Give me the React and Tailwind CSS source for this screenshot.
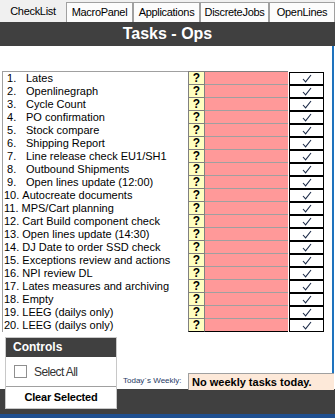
import React from "react"

const tabs = [
  { label: "CheckList", w: "w-[66px]", active: true },
  { label: "MacroPanel", w: "w-[67px]" },
  { label: "Applications", w: "w-[67px]" },
  { label: "DiscreteJobs", w: "w-[69px]" },
  { label: "OpenLines", w: "w-[66px]" },
]

const tasks = [
  "Lates",
  "Openlinegraph",
  "Cycle Count",
  "PO confirmation",
  "Stock compare",
  "Shipping Report",
  "Line release check EU1/SH1",
  "Outbound Shipments",
  "Open lines update (12:00)",
  "Autocreate documents",
  "MPS/Cart planning",
  "Cart Build component check",
  "Open lines update (14:30)",
  "DJ Date to order SSD check",
  "Exceptions review and actions",
  "NPI review DL",
  "Lates measures and archiving",
  "Empty",
  "LEEG (dailys only)",
  "LEEG (dailys only)",
]

const Check = () => (
  <svg width="10" height="9" viewBox="0 0 10 9" fill="none">
    <path d="M1 5 L3.6 7.8 L9 1" stroke="#1c2b48" strokeWidth="1.1" />
  </svg>
)

export default function App() {
  return (
    <div className="w-[335px] h-[418px] overflow-hidden bg-white flex flex-col font-['Liberation_Sans',Arial,sans-serif]">
      {/* Tab strip */}
      <div className="h-[22px] flex items-end bg-[#f0f0f0]">
        {tabs.map((t) =>
          t.active ? (
            <div
              key={t.label}
              className={`${t.w} h-[22px] flex items-start justify-center pt-[3px] text-[11px] tracking-[-0.3px] text-black`}
            >
              {t.label}
            </div>
          ) : (
            <div
              key={t.label}
              className={`${t.w} h-[20px] flex items-center justify-center bg-[#fcfcfc] border-l border-r border-t border-[#a0a0a0] text-[11px] tracking-[-0.3px] text-black`}
            >
              {t.label}
            </div>
          )
        )}
      </div>

      {/* Header */}
      <div className="h-[24px] bg-[#404040] flex items-center justify-center text-white font-bold text-[16px]">
        Tasks - Ops
      </div>

      {/* Task list */}
      <div className="h-[291px] flex pt-[25px] pl-[2px] mr-[1px] border-r-2 border-[#1e73be]">
        <div className="w-[186px] h-[261px] border-l border-t border-[#a0a0a0] text-[11px] text-black">
          {tasks.map((task, i) => (
            <div key={i} className="h-[13px] leading-[13px] flex whitespace-nowrap">
              {i < 9 ? (
                <span className="w-[23px] pl-[4px]">{i + 1}.</span>
              ) : (
                <span className="pl-[1px] pr-[3px]">{i + 1}.</span>
              )}
              <span>{task}</span>
            </div>
          ))}
        </div>
        <div className="flex flex-col">
          <div className="flex border-t border-[#808080] w-[100px]" />
          {tasks.map((_, i) => (
            <div key={i} className="flex h-[13px]">
              <div
                className={`w-[17px] bg-[#ffffc0] border-l border-r border-b ${
                  i === tasks.length - 1 ? "border-b-black" : "border-b-[#808080]"
                } border-[#808080] flex items-center justify-center text-[12px] font-bold leading-none`}
              >
                ?
              </div>
              <div
                className={`w-[83px] bg-[#ff9999] border-b ${
                  i === tasks.length - 1 ? "border-black" : "border-[#a0a0a0]"
                }`}
              />
              <div className="ml-[1px] w-[35px] bg-white border border-black flex items-center justify-center">
                <Check />
              </div>
            </div>
          ))}
        </div>
      </div>

      {/* Bottom area */}
      <div className="flex-1 flex items-start bg-[linear-gradient(to_bottom,#ffffff_52px,#404040_52px,#404040_77px,#1f4f8f_77px)]">
        <div className="ml-[5px] w-[112px] h-[72px] border border-[#c8c8c8] bg-white flex flex-col">
          <div className="h-[19px] bg-[#404040] text-white font-bold text-[12px] leading-[19px] pl-[7px]">
            Controls
          </div>
          <div className="h-[30px] flex items-center pl-[8px] border-b border-[#a0a0a0]">
            <div className="w-[13px] h-[13px] border border-[#8f8f8f] bg-white" />
            <span className="ml-[7px] text-[12px] tracking-[-0.6px] text-[#333]">Select All</span>
          </div>
          <div className="flex-1 flex items-center justify-center font-bold text-[11px] tracking-[-0.2px] text-black">
            Clear Selected
          </div>
        </div>
        <div className="ml-[6px] mt-[39px] w-[65px] text-[8px] leading-[10px] text-[#1f3b64] whitespace-nowrap">
          Today`s Weekly:
        </div>
        <div className="flex-1 flex flex-col">
          <div className="h-[36px] mr-[1px] border-r-2 border-[#1e73be]" />
          <div className="h-[17px] mr-[1px] bg-[#fde9d9] border-l border-t border-[#a0a0a0] pl-[3px] text-[11px] leading-[16px] font-bold text-black whitespace-nowrap">
            No weekly tasks today.
          </div>
        </div>
      </div>
    </div>
  )
}
